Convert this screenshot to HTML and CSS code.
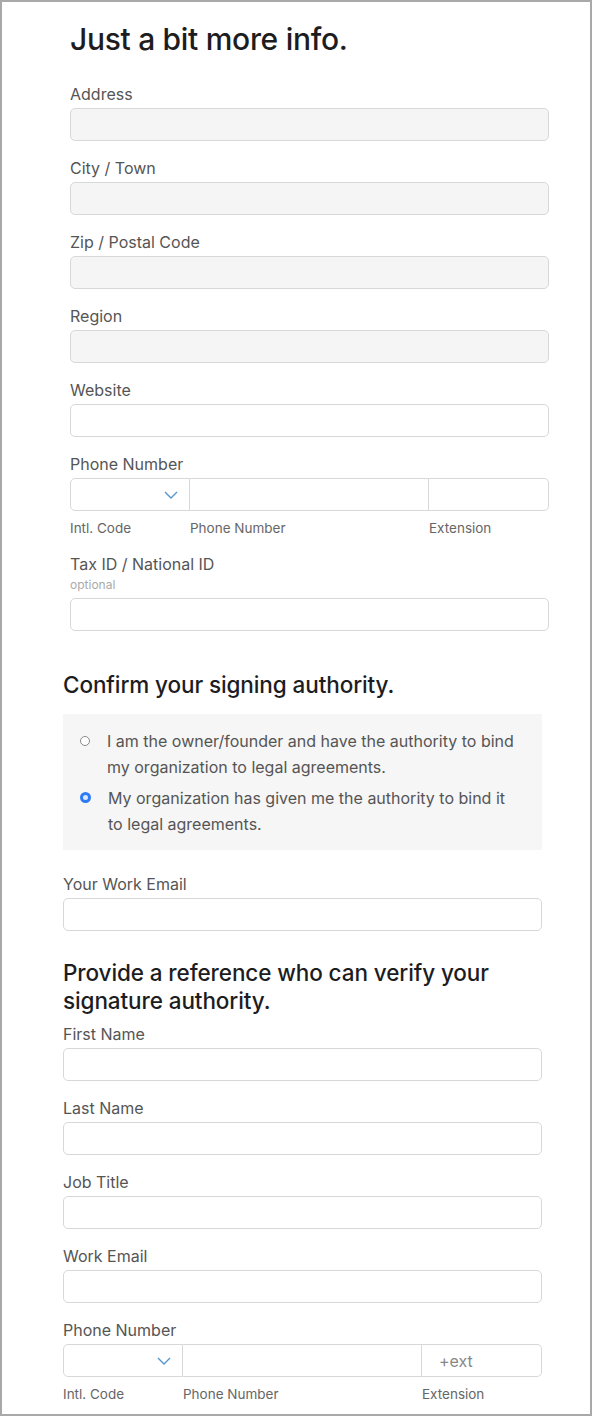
FILE: index.html
```html
<!DOCTYPE html>
<html lang="en">
<head>
  <meta charset="UTF-8" />
  <meta name="viewport" content="width=device-width, initial-scale=1.0"/>
  <title>Just a bit more info</title>
  <link rel="stylesheet" href="styles.css">
</head>
<body>

<div class="frame">

    <!-- Organization details -->
    <div class="org-details">
        <h1 class="page-title">Just a bit more info.</h1>

        <div class="field">
            <label for="address">Address</label>
            <input type="text" id="address" class="locked" disabled>
        </div>

        <div class="field">
            <label for="city">City / Town</label>
            <input type="text" id="city" class="locked" disabled>
        </div>

        <div class="field">
            <label for="zip">Zip / Postal Code</label>
            <input type="text" id="zip" class="locked" disabled>
        </div>

        <div class="field">
            <label for="region">Region</label>
            <input type="text" id="region" class="locked" disabled>
        </div>

        <div class="field">
            <label for="website">Website</label>
            <input type="text" id="website">
        </div>

        <div class="field">
            <label>Phone Number</label>
            <div class="phone-row">
                <div class="code-select">
                    <svg width="14" height="8" viewBox="0 0 14 8"><path d="M1 1l6 6 6-6" fill="none" stroke="#5496cc" stroke-width="1.4"/></svg>
                </div>
                <input type="tel" class="phone-main">
                <input type="text" class="phone-ext">
            </div>
            <div class="phone-captions">
                <span>Intl. Code</span>
                <span>Phone Number</span>
                <span>Extension</span>
            </div>
        </div>

        <div class="field">
            <label for="taxId">Tax ID / National ID</label>
            <span class="hint">optional</span>
            <input type="text" id="taxId">
        </div>
    </div>

    <!-- Signing authority -->
    <h2 class="section-title first">Confirm your signing authority.</h2>
    <div class="authority-box">
        <label class="choice">
            <span class="radio"></span>
            <span>I am the owner/founder and have the authority to bind my organization to legal agreements.</span>
        </label>
        <label class="choice">
            <span class="radio checked"></span>
            <span>My organization has given me the authority to bind it to&nbsp;legal agreements.</span>
        </label>
    </div>

    <div class="field email-field">
        <label for="workEmail">Your Work Email</label>
        <input type="email" id="workEmail">
    </div>

    <!-- Reference contact -->
    <h2 class="section-title">Provide a reference who can verify your signature authority.</h2>

    <div class="field">
        <label for="refFirst">First Name</label>
        <input type="text" id="refFirst">
    </div>

    <div class="field">
        <label for="refLast">Last Name</label>
        <input type="text" id="refLast">
    </div>

    <div class="field">
        <label for="refTitle">Job Title</label>
        <input type="text" id="refTitle">
    </div>

    <div class="field">
        <label for="refEmail">Work Email</label>
        <input type="email" id="refEmail">
    </div>

    <div class="field">
        <label>Phone Number</label>
        <div class="phone-row">
            <div class="code-select">
                <svg width="14" height="8" viewBox="0 0 14 8"><path d="M1 1l6 6 6-6" fill="none" stroke="#5496cc" stroke-width="1.4"/></svg>
            </div>
            <input type="tel" class="phone-main">
            <input type="text" class="phone-ext" placeholder="+ext">
        </div>
        <div class="phone-captions">
            <span>Intl. Code</span>
            <span>Phone Number</span>
            <span>Extension</span>
        </div>
    </div>

</div>

</body>
</html>
```

FILE: styles.css
```css
body {
    margin: 0;
    padding: 0;
    background-color: white;
    font-family: Inter, "Liberation Sans", sans-serif;
    color: #1d1d1f;
}

.frame {
    box-sizing: border-box;
    width: 592px;
    height: 1416px;
    border: 2px solid #a9a9a9;
    padding: 0 48px 0 61px;
    overflow: hidden;
}

.org-details {
    width: 479px;
    margin-left: 7px;
}

.page-title {
    margin: 19px 0 27px;
    font-size: 30px;
    line-height: 36px;
    font-weight: 500;
    letter-spacing: -0.3px;
}

.field {
    margin-bottom: 17px;
}

.field label {
    display: block;
    margin-bottom: 4px;
    font-size: 16px;
    line-height: 20px;
    color: #555;
}

.hint {
    display: block;
    margin: 3px 0 6px;
    font-size: 12px;
    line-height: 14px;
    color: #aaa;
}

input {
    box-sizing: border-box;
    display: block;
    width: 100%;
    height: 33px;
    margin: 0;
    padding: 0 12px;
    font-family: inherit;
    font-size: 16px;
    background-color: white;
    border: 1px solid #d8d8d8;
    border-radius: 5px;
    outline: none;
}

input.locked {
    background-color: #f5f5f5;
}

input::placeholder {
    color: #888;
}

.phone-row {
    display: grid;
    grid-template-columns: 120px 1fr 120px;
}

.code-select {
    box-sizing: border-box;
    height: 33px;
    display: flex;
    align-items: center;
    justify-content: flex-end;
    padding-right: 11px;
    border: 1px solid #d8d8d8;
    border-radius: 5px 0 0 5px;
}

.phone-main {
    border-left: none;
    border-radius: 0;
}

.phone-ext {
    border-left: none;
    border-radius: 0 5px 5px 0;
    padding-left: 17px;
}

.phone-captions {
    display: grid;
    grid-template-columns: 120px 1fr 120px;
    margin-top: 8px;
    font-size: 13.5px;
    line-height: 18px;
    color: #666;
}

.section-title {
    margin: 28px 0 9px;
    font-size: 22.5px;
    line-height: 28px;
    font-weight: 500;
    letter-spacing: -0.1px;
}

.section-title.first {
    margin: 40px 0 15px;
}

.authority-box {
    background-color: #f6f6f6;
    padding: 14px 18px 13px 17px;
}

.choice {
    display: flex;
    gap: 17px;
    font-size: 16px;
    line-height: 26px;
    color: #555;
}

.choice + .choice {
    margin-top: 5px;
}

.radio {
    flex: none;
    box-sizing: border-box;
    width: 10px;
    height: 10px;
    margin-top: 8px;
    border: 1px solid #8a8a8a;
    border-radius: 50%;
    background-color: white;
}

.radio.checked {
    width: 11px;
    height: 11px;
    margin-top: 7px;
    border: 3.5px solid #2f7bf5;
    background-color: #dce8ff;
}

.email-field {
    margin-top: 24px;
    margin-bottom: 0;
}
```
